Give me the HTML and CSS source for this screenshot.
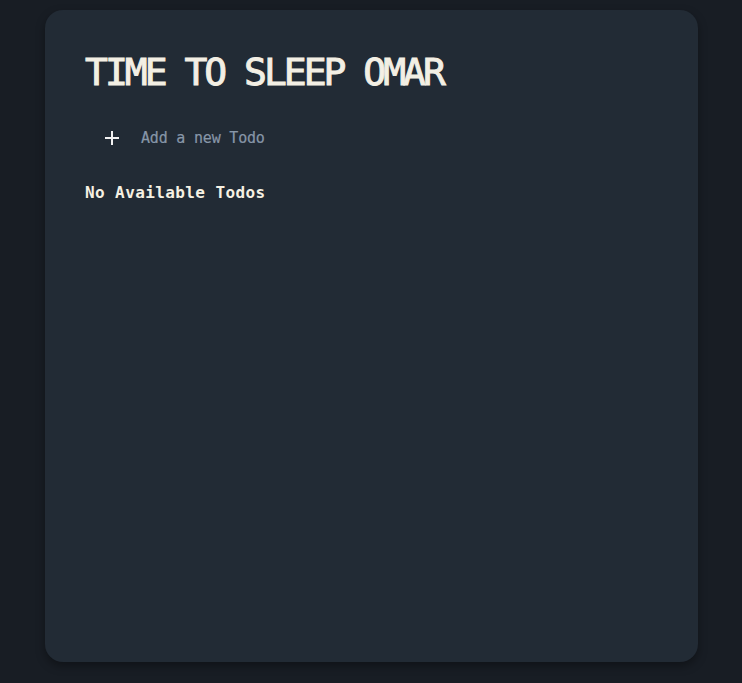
FILE: index.html
```html
<!DOCTYPE html>
<html>
<head>
<meta charset="utf-8">
<link rel="stylesheet" href="styles.css">
</head>
<body>
<main class="card">
  <h1 class="title">TIME TO SLEEP OMAR</h1>
  <div class="add-row">
    <svg class="plus" width="16" height="16" viewBox="0 0 16 16"><path d="M8 1v14M1 8h14" stroke="#f2f2f2" stroke-width="2" fill="none"/></svg>
    <span class="add-text">Add a new Todo</span>
  </div>
  <p class="empty">No Available Todos</p>
</main>
</body>
</html>
```
FILE: styles.css
```css
html, body { margin: 0; padding: 0; }
body {
  background: #181d24;
  height: 683px;
  font-family: "DejaVu Sans Mono", monospace;
  display: flex;
  justify-content: center;
  padding-top: 10px;
  box-sizing: border-box;
}
.card {
  width: 653px;
  height: 652px;
  background: #222b35;
  border-radius: 18px;
  box-shadow: 0 4px 10px rgba(0,0,0,0.35);
  padding: 43px 40px;
  box-sizing: border-box;
  margin-left: 1px;
}
.title {
  margin: 0;
  font-size: 38px;
  letter-spacing: -3px;
  font-weight: normal;
  -webkit-text-stroke: 1px #f3efe4;
  color: #f3efe4;
  line-height: 1;
}
.add-row {
  display: flex;
  align-items: center;
  gap: 21px;
  margin-top: 38px;
  padding-left: 19px;
}
.plus { display: block; }
.add-text {
  font-size: 15px;
  letter-spacing: -0.2px;
  color: #8796a8;
  -webkit-text-stroke: 0.2px #8796a8;
}
.empty {
  margin: 36px 0 0;
  font-size: 16px;
  letter-spacing: 0.4px;
  font-weight: bold;
  color: #f6f1e3;
}
```
